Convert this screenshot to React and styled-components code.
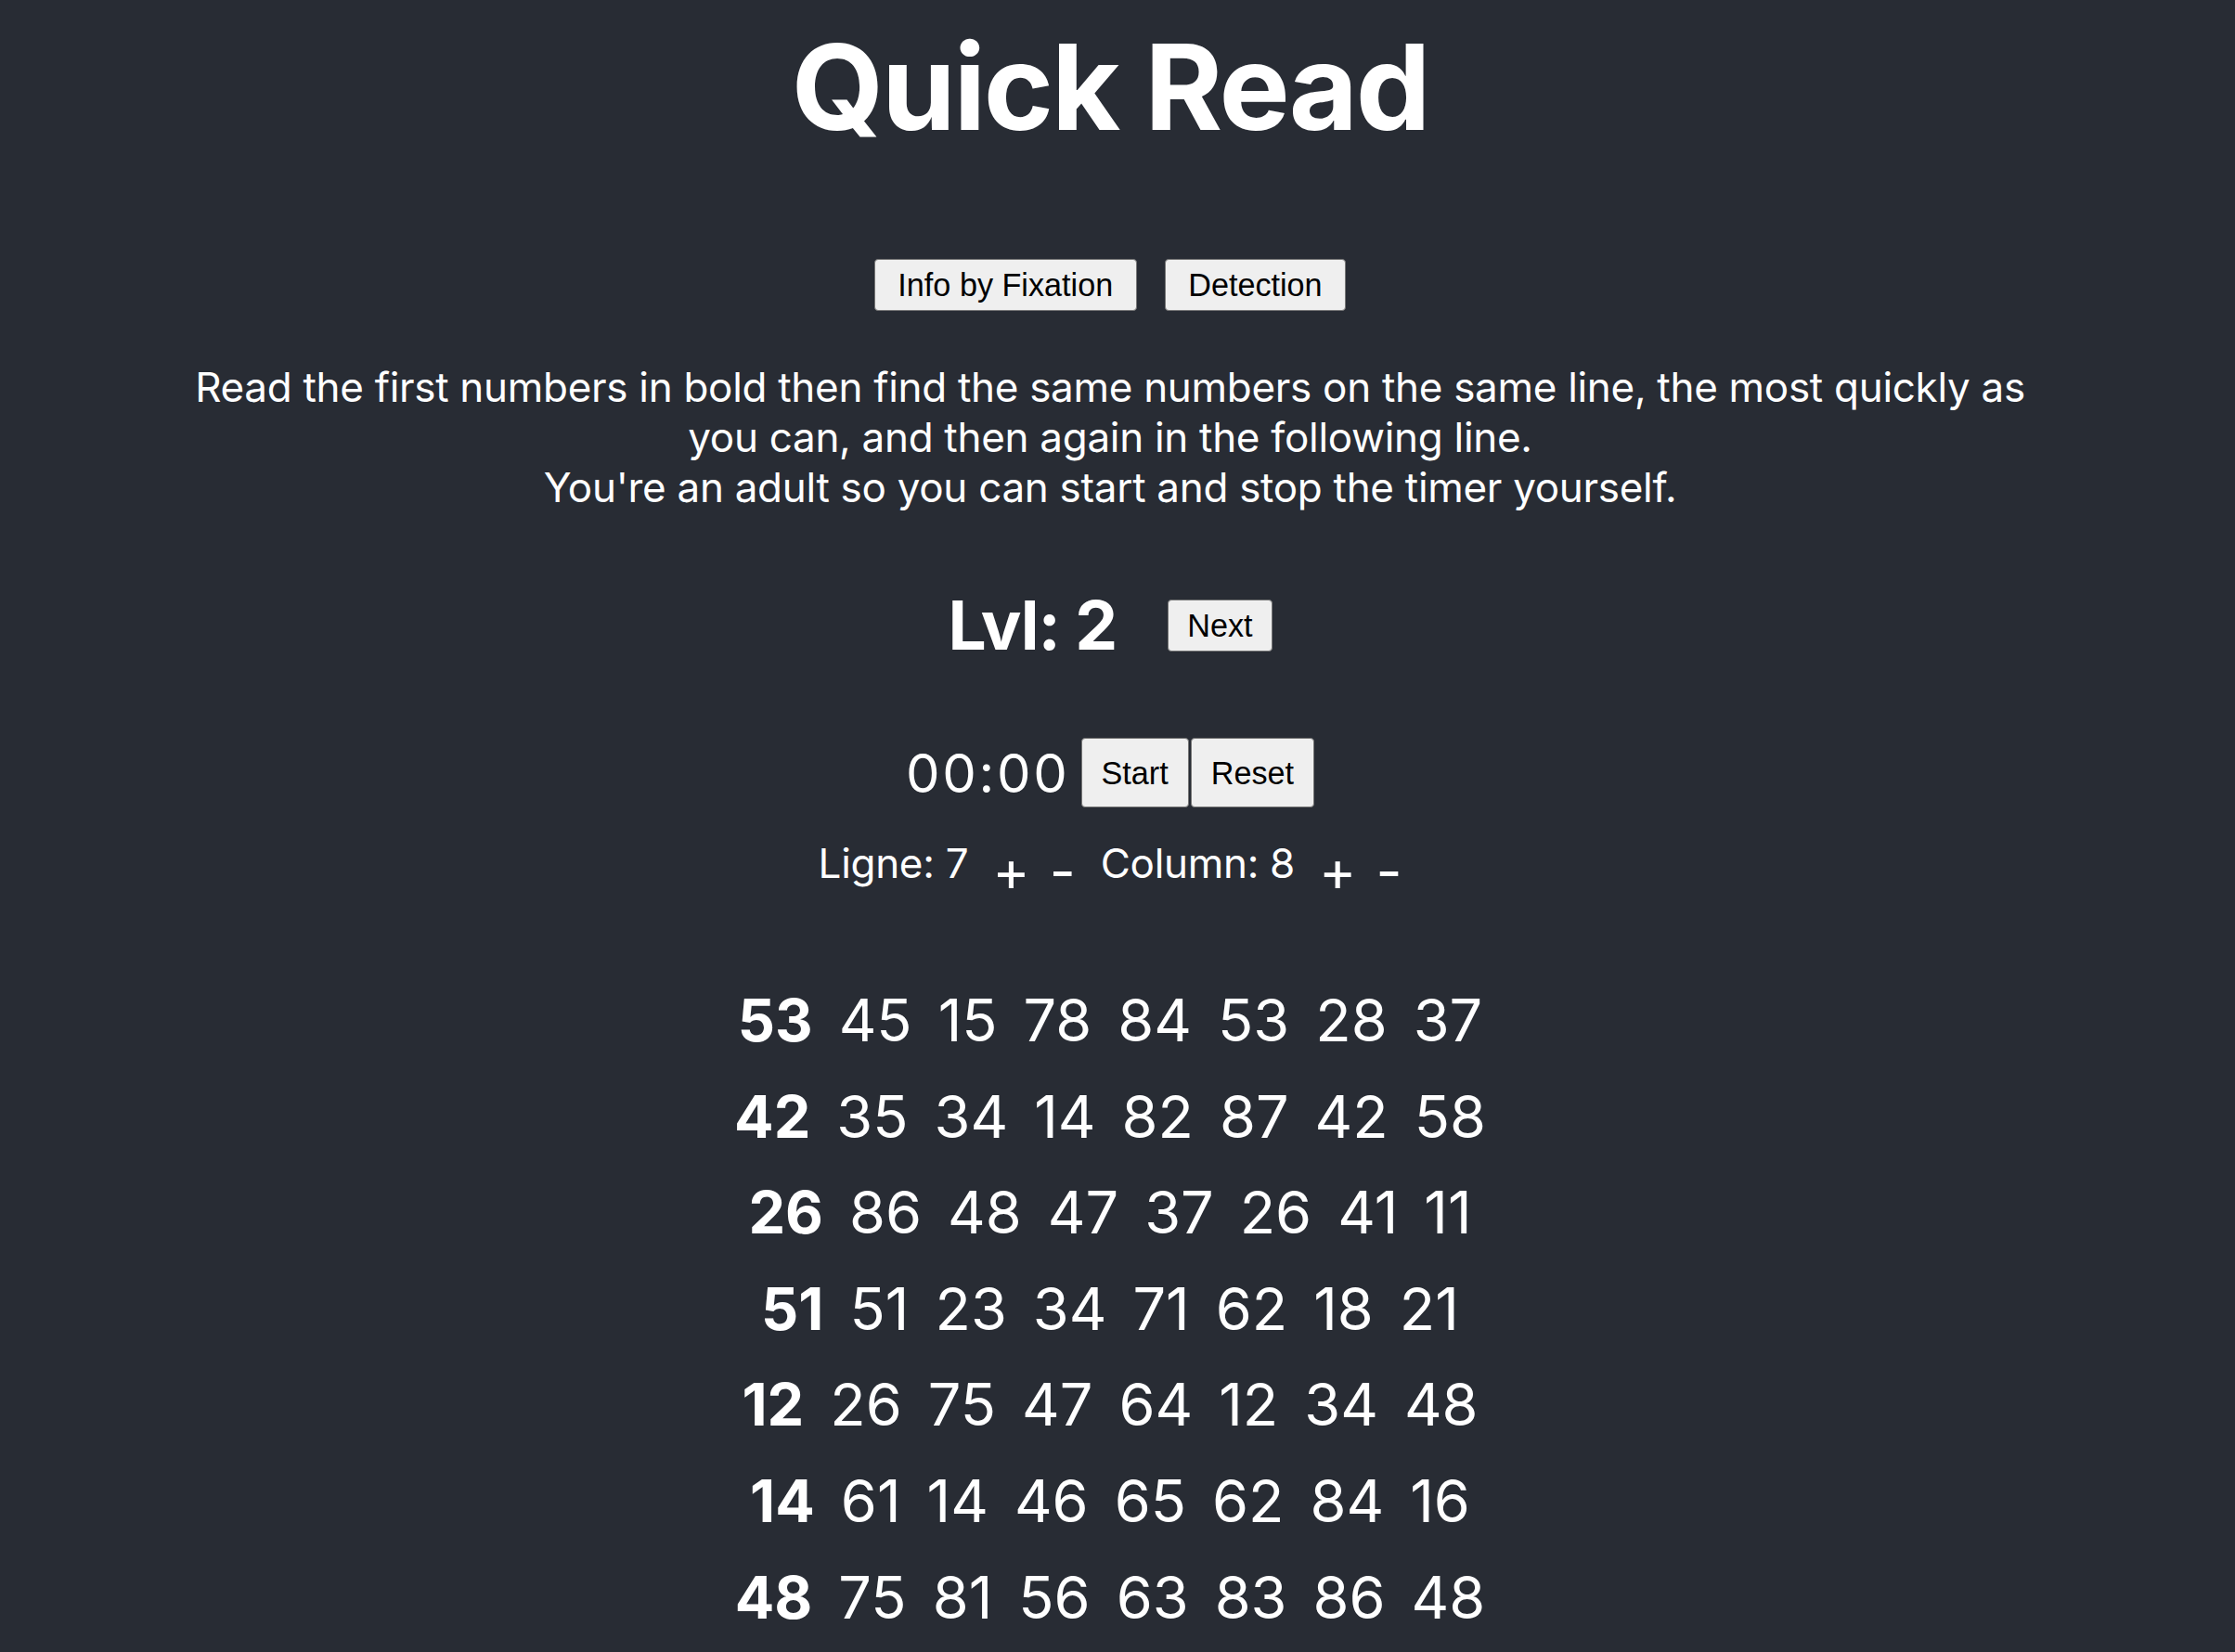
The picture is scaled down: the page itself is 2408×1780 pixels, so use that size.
import React from "react";
import styled, { createGlobalStyle } from "styled-components";

const GlobalStyle = createGlobalStyle`
  html, body {
    margin: 0;
    padding: 0;
    background: #282c34;
    overflow: hidden;
  }
  * { box-sizing: border-box; }
`;

const Page = styled.main`
  min-height: 100vh;
  display: flex;
  flex-direction: column;
  align-items: center;
  padding-right: 16px;
  color: #ffffff;
  font-family: Inter, "Noto Sans", sans-serif;
  font-size: 44px;
  letter-spacing: -0.3px;
`;

const Title = styled.h1`
  margin: 30px 0 0;
  font-size: 128px;
  line-height: 128px;
  font-weight: 700;
  letter-spacing: -2.2px;
`;

const ModeBar = styled.div`
  display: flex;
  gap: 30px;
  margin-top: 121px;
`;

const paddings = {
  mode: "8px 24.5px",
  normal: "8px 20px",
  tall: "17.5px 21px",
};

const Button = styled.button`
  font-family: "Liberation Sans", Arial, sans-serif;
  font-size: 34.2px;
  line-height: 38px;
  letter-spacing: 0;
  color: #000;
  background: #efefef;
  border: 1px solid #767676;
  border-radius: 4px;
  padding: ${(p) => paddings[p.$size || "normal"]};
  cursor: pointer;
`;

const Description = styled.p`
  margin: 54.5px 0 0;
  max-width: 2030px;
  text-align: center;
  line-height: 54px;
`;

const LevelRow = styled.div`
  display: flex;
  align-items: center;
  gap: 55px;
  margin-top: 78.5px;
`;

const Level = styled.h2`
  margin: 0;
  font-size: 73px;
  line-height: 88px;
  font-weight: 700;
  letter-spacing: -1px;
`;

const TimerRow = styled.div`
  display: flex;
  align-items: center;
  gap: 2px;
  margin-top: 77px;
`;

const Time = styled.span`
  font-size: 58px;
  line-height: 70px;
  letter-spacing: 2.7px;
  margin-right: 10px;
`;

const SizeRow = styled.div`
  display: flex;
  align-items: center;
  gap: 27px;
  margin-top: 27px;
`;

const Control = styled.div`
  display: flex;
  align-items: center;
  gap: 26px;
`;

const SizeLabel = styled.span`
  line-height: 50px;
`;

const Steppers = styled.div`
  display: flex;
  align-items: center;
  gap: 21px;
`;

const Stepper = styled.button`
  font-family: Inter, "Noto Sans", sans-serif;
  font-size: 61px;
  line-height: 50px;
  padding: 16px 0 0;
  background: none;
  border: none;
  color: #ffffff;
  cursor: pointer;
`;

const Grid = styled.div`
  display: flex;
  flex-direction: column;
  align-items: center;
  margin-top: 85px;
`;

const Row = styled.div`
  display: flex;
  gap: 28px;
  font-size: 63px;
  line-height: 103.6px;
  letter-spacing: 0;
`;

const Num = styled.span`
  font-weight: ${(p) => (p.$bold ? 700 : 400)};
`;

const rows = [
  [53, 45, 15, 78, 84, 53, 28, 37],
  [42, 35, 34, 14, 82, 87, 42, 58],
  [26, 86, 48, 47, 37, 26, 41, 11],
  [51, 51, 23, 34, 71, 62, 18, 21],
  [12, 26, 75, 47, 64, 12, 34, 48],
  [14, 61, 14, 46, 65, 62, 84, 16],
  [48, 75, 81, 56, 63, 83, 86, 48],
];

function SizeControl({ label, value }) {
  return (
    <Control>
      <SizeLabel>
        {label}: {value}
      </SizeLabel>
      <Steppers>
        <Stepper>+</Stepper>
        <Stepper>-</Stepper>
      </Steppers>
    </Control>
  );
}

export default function App() {
  return (
    <>
      <GlobalStyle />
      <Page>
        <Title>Quick Read</Title>
        <ModeBar>
          <Button $size="mode">Info by Fixation</Button>
          <Button $size="mode">Detection</Button>
        </ModeBar>
        <Description>
          Read the first numbers in bold then find the same numbers on the same line, the most quickly as you can, and then again in the following line.
          <br />
          You're an adult so you can start and stop the timer yourself.
        </Description>
        <LevelRow>
          <Level>Lvl: 2</Level>
          <Button>Next</Button>
        </LevelRow>
        <TimerRow>
          <Time>00:00</Time>
          <Button $size="tall">Start</Button>
          <Button $size="tall">Reset</Button>
        </TimerRow>
        <SizeRow>
          <SizeControl label="Ligne" value={7} />
          <SizeControl label="Column" value={8} />
        </SizeRow>
        <Grid>
          {rows.map((r, i) => (
            <Row key={i}>
              {r.map((n, j) => (
                <Num key={j} $bold={j === 0}>
                  {n}
                </Num>
              ))}
            </Row>
          ))}
        </Grid>
      </Page>
    </>
  );
}
